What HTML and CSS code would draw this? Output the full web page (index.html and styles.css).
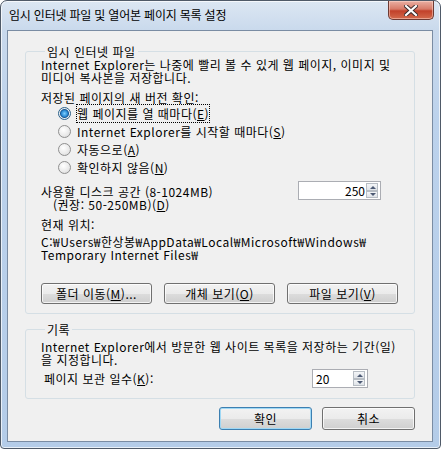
FILE: index.html
```html
<!DOCTYPE html>
<html lang="ko">
<head>
    <meta charset="UTF-8">
    <title>임시 인터넷 파일 및 열어본 페이지 목록 설정</title>
    <link rel="stylesheet" href="styles.css">
</head>
<body>
    <div class="window">
        <div class="titlebar">
            <div class="title">임시 인터넷 파일 및 열어본 페이지 목록 설정</div>
            <div class="close-button">
                <svg width="14" height="11" viewBox="0 0 14 11">
                    <path d="M2 1 L12 10 M12 1 L2 10" stroke="#3a2a2a" stroke-width="4" stroke-linecap="square"/>
                    <path d="M2 1 L12 10 M12 1 L2 10" stroke="#fff" stroke-width="2.2" stroke-linecap="square"/>
                </svg>
            </div>
        </div>
        <div class="client">
            <fieldset class="group group-cache">
                <legend>임시 인터넷 파일</legend>
                <div class="text">Internet Explorer는 나중에 빨리 볼 수 있게 웹 페이지, 이미지 및<br>미디어 복사본을 저장합니다.</div>
                <div class="text section-label">저장된 페이지의 새 버전 확인:</div>
                <div class="radios">
                    <div class="radio-row"><span class="radio checked"></span><span class="radio-text focused">웹 페이지를 열 때마다(<u>E</u>)</span></div>
                    <div class="radio-row"><span class="radio"></span><span class="radio-text">Internet Explorer를 시작할 때마다(<u>S</u>)</span></div>
                    <div class="radio-row"><span class="radio"></span><span class="radio-text">자동으로(<u>A</u>)</span></div>
                    <div class="radio-row"><span class="radio"></span><span class="radio-text">확인하지 않음(<u>N</u>)</span></div>
                </div>
                <div class="disk-row">
                    <div class="text disk-label">사용할 디스크 공간 (8-1024MB)<br><span class="indent">(권장: 50-250MB)(<u>D</u>)</span></div>
                    <div class="spin spin-wide">
                        <span class="spin-value right">250</span>
                        <span class="spin-buttons">
                            <span class="spin-up"></span>
                            <span class="spin-down"></span>
                        </span>
                    </div>
                </div>
                <div class="text location-label">현재 위치:</div>
                <div class="text path">C:₩Users₩한상봉₩AppData₩Local₩Microsoft₩Windows₩<br>Temporary Internet Files₩</div>
                <div class="button-row">
                    <button class="button">폴더 이동(<u>M</u>)...</button>
                    <button class="button">개체 보기(<u>O</u>)</button>
                    <button class="button">파일 보기(<u>V</u>)</button>
                </div>
            </fieldset>
            <fieldset class="group group-history">
                <legend>기록</legend>
                <div class="text">Internet Explorer에서 방문한 웹 사이트 목록을 저장하는 기간(일)<br>을 지정합니다.</div>
                <div class="days-row">
                    <div class="text">페이지 보관 일수(<u>K</u>):</div>
                    <div class="spin spin-narrow">
                        <span class="spin-value">20</span>
                        <span class="spin-buttons">
                            <span class="spin-up"></span>
                            <span class="spin-down"></span>
                        </span>
                    </div>
                </div>
            </fieldset>
            <div class="dialog-buttons">
                <button class="button default">확인</button>
                <button class="button">취소</button>
            </div>
        </div>
    </div>
</body>
</html>
```

FILE: styles.css
```css
body {
    margin: 0;
    font-family: "Noto Sans CJK KR", "Liberation Sans", sans-serif;
    font-size: 12px;
    letter-spacing: 0.5px;
    color: #000;
    background: #fff;
}
.window {
    width: 441px;
    height: 449px;
    box-sizing: border-box;
    border: 1px solid #4f5a68;
    border-radius: 7px 7px 4px 4px;
    background: linear-gradient(180deg, #dce7f3 0px, #c9d9ec 30px, #bcd2ec 120px, #b4cce8 100%);
    box-shadow: inset 0 0 0 1px rgba(255, 255, 255, 0.7);
    padding: 0 7px 6px 6px;
    display: flex;
    flex-direction: column;
}
.titlebar {
    height: 29px;
    display: flex;
    justify-content: space-between;
    flex-shrink: 0;
}
.title {
    padding: 6px 0 0 2px;
    line-height: 16px;
    font-size: 12px;
    letter-spacing: -0.2px;
    color: #000;
}
.close-button {
    width: 46px;
    height: 19px;
    box-sizing: border-box;
    margin-right: -1px;
    border: 1px solid #6d3a33;
    border-top: none;
    border-radius: 0 0 5px 5px;
    background: linear-gradient(180deg, #eab0a3 0%, #d77a68 45%, #c2412a 55%, #d36a4c 100%);
    box-shadow: inset 0 0 0 1px rgba(255, 220, 210, 0.5);
    display: flex;
    align-items: center;
    justify-content: center;
}
.client {
    flex: 1;
    background: #f0f0f0;
    border: 1px solid #7a8ca3;
    padding: 14px 17px 0 17px;
    display: flex;
    flex-direction: column;
}
.group {
    margin: 0;
    padding: 0 15px 0 15px;
    border: 1px solid #d5dfe5;
    border-radius: 3px;
}
.group legend {
    padding: 0 2px;
    margin-left: 4px;
    line-height: 13px;
}
.group-cache {
    padding-bottom: 9px;
}
.group-history {
    margin-top: 9px;
    padding-top: 4px;
    padding-bottom: 10px;
}
.text {
    line-height: 13px;
    white-space: nowrap;
}
.section-label {
    margin-top: 7px;
}
.radios {
    padding-left: 17px;
}
.radio-row {
    height: 18px;
    display: flex;
    align-items: center;
    gap: 6px;
}
.radio {
    width: 11px;
    height: 11px;
    border-radius: 50%;
    border: 1px solid #8f8f8f;
    background: radial-gradient(circle at 40% 35%, #ffffff 0%, #e9e9e9 60%, #d4d4d4 100%);
    flex-shrink: 0;
}
.radio.checked {
    border-color: #2c628b;
    background: radial-gradient(circle, #7fd0ff 0px, #2a8ad4 3px, #1c5a94 4px, #e9eef3 5px, #f7f7f7 100%);
}
.radio-text.focused {
    outline: 1px dotted #000;
}
.disk-row {
    margin-top: 9px;
    display: flex;
    justify-content: space-between;
    align-items: flex-start;
}
.disk-label .indent {
    padding-left: 12px;
}
.spin {
    height: 19px;
    box-sizing: border-box;
    border: 1px solid #abadb3;
    background: #fff;
    display: flex;
    align-items: center;
    padding: 0 2px 0 3px;
    letter-spacing: 0;
}
.spin-wide {
    width: 83px;
    margin-top: -4px;
    margin-right: 18px;
}
.spin-narrow {
    width: 56px;
}
.spin-value {
    flex: 1;
    line-height: 13px;
}
.spin-value.right {
    text-align: right;
    padding-right: 1px;
}
.spin-buttons {
    width: 12px;
    height: 15px;
    display: flex;
    flex-direction: column;
}
.spin-up, .spin-down {
    flex: 1;
    border: 1px solid #b7bdc4;
    background: linear-gradient(180deg, #f4f6f8, #dfe3e8);
    position: relative;
}
.spin-up::after, .spin-down::after {
    content: "";
    position: absolute;
    left: 3px;
    top: 2px;
    border-left: 3px solid transparent;
    border-right: 3px solid transparent;
}
.spin-up::after {
    border-bottom: 3px solid #4d5a74;
}
.spin-down::after {
    top: 1px;
    border-top: 3px solid #4d5a74;
}
.location-label {
    margin-top: 7px;
}
.path {
    margin-top: 4px;
}
.button-row {
    margin-top: 22px;
    display: flex;
    gap: 12px;
}
.button {
    width: 111px;
    height: 21px;
    padding: 0;
    font-family: inherit;
    font-size: 12px;
    letter-spacing: 0.5px;
    line-height: 13px;
    color: #000;
    border: 1px solid #707070;
    border-radius: 3px;
    background: linear-gradient(180deg, #f2f2f2 0%, #ebebeb 50%, #dddddd 51%, #cfcfcf 100%);
    box-shadow: inset 0 0 0 1px rgba(255, 255, 255, 0.75);
}
.days-row {
    margin-top: 3px;
    display: flex;
    align-items: center;
    justify-content: space-between;
    height: 19px;
    padding-left: 3px;
    padding-right: 31px;
}
.dialog-buttons {
    margin-top: 8px;
    display: flex;
    justify-content: flex-end;
    gap: 10px;
}
.dialog-buttons .button {
    width: 93px;
    height: 23px;
}
.button.default {
    border-color: #3c7fb1;
    box-shadow: inset 0 0 0 1px #9fd8f5;
}
```
